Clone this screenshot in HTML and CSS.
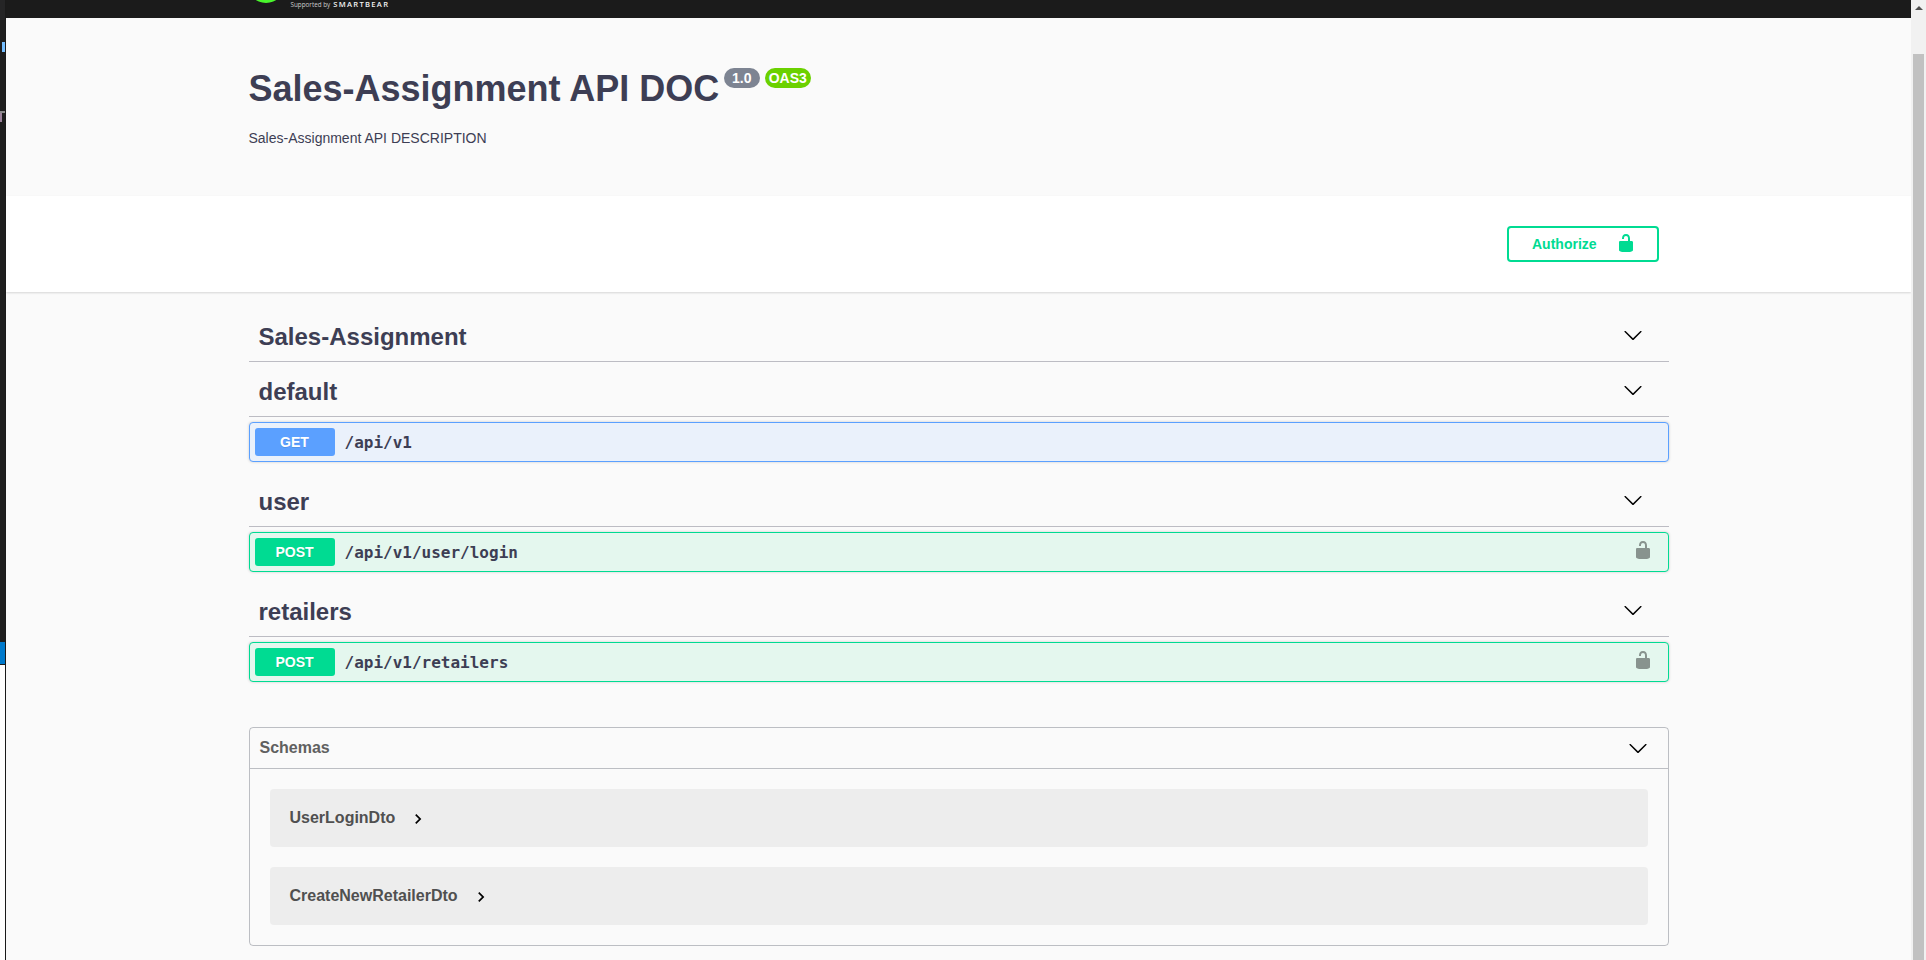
FILE: index.html
```html
<!DOCTYPE html>
<html lang="en">
<head>
<meta charset="utf-8">
<title>Swagger UI</title>
<link rel="stylesheet" href="styles.css">
</head>
<body>
<svg class="defs" width="0" height="0">
  <symbol id="unlocked" viewBox="0 0 20 20"><path d="M15.8 8H14V5.6C14 2.703 12.665 1 10 1 7.334 1 6 2.703 6 5.6V6h2v-.801C8 3.754 8.797 3 10 3c1.203 0 2 .754 2 2.199V8H4c-.553 0-1 .646-1 1.199V17c0 .549.428 1.139.951 1.307l1.197.387C5.672 18.861 6.55 19 7.1 19h5.8c.549 0 1.428-.139 1.951-.307l1.196-.387c.524-.167.953-.757.953-1.306V9.199C17 8.646 16.352 8 15.8 8z"/></symbol>
  <symbol id="arrow-down" viewBox="0 0 20 20"><path d="M17.418 6.109c.272-.268.709-.268.979 0s.271.701 0 .969l-7.908 7.83c-.27.268-.707.268-.979 0l-7.908-7.83c-.27-.268-.27-.701 0-.969.271-.268.709-.268.979 0L10 13.25l7.418-7.141z"/></symbol>
  <symbol id="arrow" viewBox="0 0 24 24"><path d="M10 6L8.59 7.41 13.17 12l-4.58 4.59L10 18l6-6z"/></symbol>
</svg>
<div class="window">
  <aside class="edge">
    <div class="edge-tab"></div>
    <div class="edge-mark"></div>
    <div class="edge-glyph"></div>
    <div class="edge-status"></div>
    <div class="edge-blank"></div>
  </aside>
  <main class="page">
    <header class="topbar">
      <div class="wrapper topbar-row">
        <div class="logo-ball"></div>
        <div class="logo-text"><span class="supported">Supported by</span> <span class="brand">SMARTBEAR</span></div>
      </div>
    </header>
    <section class="info wrapper">
      <div class="title-row">
        <h1 class="title">Sales-Assignment API DOC</h1>
        <span class="badge version">1.0</span>
        <span class="badge oas">OAS3</span>
      </div>
      <p class="description">Sales-Assignment API DESCRIPTION</p>
    </section>
    <section class="schemes">
      <div class="wrapper schemes-row">
        <button class="authorize"><span>Authorize</span><svg class="icon"><use href="#unlocked"/></svg></button>
      </div>
    </section>
    <section class="wrapper operations">
      <h3 class="tag"><span>Sales-Assignment</span><svg class="icon"><use href="#arrow-down"/></svg></h3>
      <h3 class="tag"><span>default</span><svg class="icon"><use href="#arrow-down"/></svg></h3>
      <div class="op get"><span class="method">GET</span><span class="path">/api/v1</span></div>
      <h3 class="tag"><span>user</span><svg class="icon"><use href="#arrow-down"/></svg></h3>
      <div class="op post"><span class="method">POST</span><span class="path">/api/v1/user/login</span><svg class="icon lock"><use href="#unlocked"/></svg></div>
      <h3 class="tag"><span>retailers</span><svg class="icon"><use href="#arrow-down"/></svg></h3>
      <div class="op post"><span class="method">POST</span><span class="path">/api/v1/retailers</span><svg class="icon lock"><use href="#unlocked"/></svg></div>
    </section>
    <section class="wrapper">
      <div class="models">
        <h4 class="models-head"><span>Schemas</span><svg class="icon"><use href="#arrow-down"/></svg></h4>
        <div class="models-list">
          <div class="model"><span>UserLoginDto</span><svg class="toggle"><use href="#arrow"/></svg></div>
          <div class="model"><span>CreateNewRetailerDto</span><svg class="toggle"><use href="#arrow"/></svg></div>
        </div>
      </div>
    </section>
  </main>
  <div class="scrollbar">
    <svg class="scroll-up" viewBox="0 0 8 4"><path d="M4 0L8 4H0z"/></svg>
    <div class="thumb"></div>
  </div>
</div>
</body>
</html>
```
FILE: styles.css
```css
* { box-sizing: border-box; }
body {
  margin: 0;
  overflow: hidden;
  font-family: "Liberation Sans", Arial, sans-serif;
  color: #3d3e54;
}
h1, h3, h4, p { margin: 0; }
.defs { position: absolute; }
.icon { width: 20px; height: 20px; flex: none; }

.window { display: flex; width: 1926px; height: 960px; }

/* sliver of the editor window behind the browser */
.edge {
  width: 6px;
  background: #1e1e1e;
  border-right: 1px solid #1a1a1a;
  display: flex;
  flex-direction: column;
}
.edge-tab { height: 20px; background: #252526; }
.edge-mark { width: 3px; height: 10px; margin: 22px 0 0 2px; background: #75beff; }
.edge-glyph {
  width: 5px;
  height: 11px;
  margin-top: 59px;
  border-top: 2px solid #8a8a8a;
  background: linear-gradient(#9b829b, #9b829b) 0 0 / 2px 9px no-repeat;
}
.edge-status { height: 22px; margin-top: 520px; background: #007acc; }
.edge-blank { flex: 1; margin-top: 1px; background: #fff; }

.page { flex: 1; height: 960px; overflow: hidden; background: #fafafa; }
.wrapper { width: 1460px; margin: 0 auto; padding: 0 20px; }

.topbar { height: 18px; background: #1b1b1b; }
.topbar-row { display: flex; align-items: flex-start; }
.logo-ball {
  width: 38px;
  height: 38px;
  margin: -35px 0 0 -2px;
  border-radius: 50%;
  background: #49f62c;
}
.logo-text {
  margin-left: 6px;
  display: flex;
  gap: 3px;
  line-height: 9px;
  color: #fff;
  font-family: "Open Sans", sans-serif;
}
.supported { font-size: 6.3px; color: #ccc; }
.brand { font-size: 7.6px; line-height: 8px; font-weight: 600; letter-spacing: 1.3px; color: #f2f2f2; }

.info { height: 178px; padding-top: 50px; }
.title-row { display: flex; align-items: flex-start; height: 41px; }
.title { font-size: 36px; line-height: 41px; font-weight: 700; }
.badge {
  height: 20px;
  border-radius: 20px;
  font-size: 14px;
  line-height: 20px;
  font-weight: 700;
  text-align: center;
  color: #fff;
}
.version { width: 36px; margin-left: 5px; padding-right: 1px; background: #7d8492; }
.oas { width: 46px; margin-left: 5px; padding-right: 1px; background: #6bd100; }
.description { margin-top: 21px; font-size: 14px; line-height: 16px; }

.schemes { height: 96px; padding-top: 30px; background: #fff; box-shadow: 0 1px 2px rgba(0, 0, 0, .15); }
.schemes-row { display: flex; justify-content: flex-end; }
.authorize {
  width: 152px;
  height: 36px;
  margin-right: 10px;
  padding: 0 20.5px 0 23.5px;
  display: flex;
  justify-content: space-between;
  align-items: center;
  border: 2px solid #00db92;
  border-radius: 4px;
  background: transparent;
  color: #00db92;
  fill: #00db92;
  font: 700 14px "Liberation Sans", Arial, sans-serif;
}
.authorize .icon { margin-top: -2px; }

.operations { padding-top: 20px; }
.tag {
  display: flex;
  justify-content: space-between;
  align-items: center;
  height: 50px;
  margin-bottom: 5px;
  padding: 0 26px 0 10px;
  border-bottom: 1px solid rgba(59, 59, 81, .32);
  font-size: 24px;
}
.tag .icon { margin-top: -3px; }
.op {
  display: flex;
  align-items: center;
  height: 40px;
  margin-bottom: 15px;
  padding: 5px;
  border: 1px solid;
  border-radius: 4px;
  box-shadow: 0 0 3px rgba(0, 0, 0, .19);
}
.get { border-color: #5ba0ff; background: #eaf1fb; }
.post { border-color: #00db92; background: #e4f7ee; }
.method {
  width: 80px;
  height: 28px;
  border-radius: 3px;
  line-height: 28px;
  text-align: center;
  font-size: 14px;
  font-weight: 700;
  color: #fff;
  text-shadow: 0 1px 0 rgba(0, 0, 0, .1);
}
.get .method { background: #5ba0ff; }
.post .method { background: #00db92; }
.path {
  flex: 1;
  padding-left: 10px;
  font: 600 16px "DejaVu Sans Mono", monospace;
}
.lock { margin: -4px 10px 0 0; fill: #000; opacity: .4; }

.models { margin-top: 45px; border: 1px solid rgba(59, 65, 81, .32); border-radius: 4px; }
.models-head {
  display: flex;
  justify-content: space-between;
  align-items: center;
  height: 41px;
  padding: 0 20px 0 10px;
  border-bottom: 1px solid rgba(59, 65, 81, .32);
  font-size: 16px;
  color: #606060;
}
.models-list { display: flex; flex-direction: column; gap: 20px; padding: 20px; }
.model {
  display: flex;
  align-items: center;
  height: 58px;
  padding-left: 20px;
  border-radius: 4px;
  background: #ededed;
  font-size: 16px;
  font-weight: 700;
  color: #505050;
}
.toggle { width: 20px; height: 20px; margin: 2px 0 0 13px; fill: #000; }

.scrollbar { width: 15px; background: #f1f1f1; }
.scroll-up { display: block; width: 8px; height: 4px; margin: 6px 0 44px 4px; fill: #505050; }
.thumb { width: 11px; height: 906px; margin-left: 2px; background: #c1c1c1; }
```
